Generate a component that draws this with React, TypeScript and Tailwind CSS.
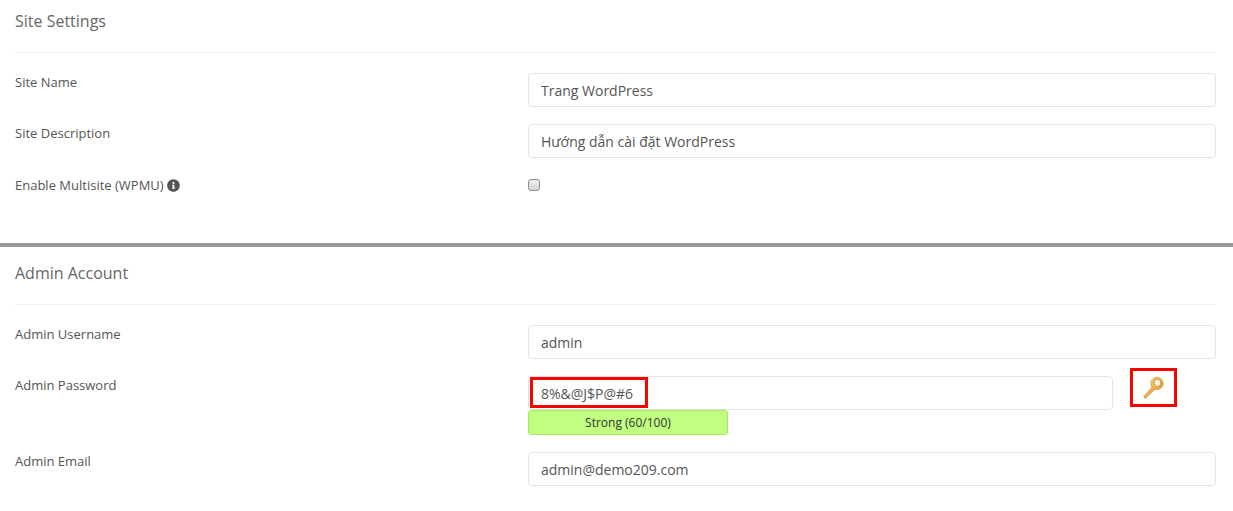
import type { ReactNode } from 'react';
import { FaInfoCircle } from 'react-icons/fa';

const fontStack = "font-['Open_Sans','Noto_Sans',sans-serif]";

function TextInput({ value, className = 'w-full' }: { value: string; className?: string }) {
  return (
    <input
      type="text"
      readOnly
      value={value}
      className={`block h-[34px] rounded-[4px] border border-[#e3e3e3] bg-white px-3 text-[14px] text-[#555] outline-none ${className}`}
    />
  );
}

function Row({ label, children }: { label: ReactNode; children: ReactNode }) {
  return (
    <div className="flex items-start">
      <div className="w-[513px] shrink-0 text-[13px] leading-[18px] font-medium text-[#555]">{label}</div>
      <div className="min-w-0 flex-1">{children}</div>
    </div>
  );
}

function KeyIcon() {
  return (
    <svg width="24" height="24" viewBox="0 0 24 24">
      <defs>
        <linearGradient id="keyGold" x1="0" y1="0" x2="1" y2="1">
          <stop offset="0" stopColor="#fbd36b" />
          <stop offset="1" stopColor="#e8962a" />
        </linearGradient>
      </defs>
      <path d="M3 22.4 1.8 20.8 10.6 10.4 13.4 12.8 6.6 19.4 5.4 19.6 4.8 21.2Z" fill="url(#keyGold)" stroke="#b97a32" strokeWidth="0.6" />
      <circle cx="15" cy="7.4" r="6.2" fill="url(#keyGold)" stroke="#c9a06a" strokeWidth="0.8" />
      <circle cx="15.4" cy="6.9" r="3.6" fill="#f3efe6" stroke="#c98a30" strokeWidth="0.9" />
    </svg>
  );
}

export default function App() {
  return (
    <div className={`relative h-[511px] overflow-hidden bg-white ${fontStack}`}>
      <section className="h-[243px] pr-[17px] pl-[15px]">
        <h2 className="h-[53px] border-b border-[#eeeeee] pt-[10px] text-[16px] leading-[22px] font-medium text-[#666]">Site Settings</h2>
        <div className="flex flex-col gap-[17px] pt-[20px]">
          <Row label="Site Name">
            <TextInput value="Trang WordPress" />
          </Row>
          <Row label="Site Description">
            <TextInput value="Hướng dẫn cài đặt WordPress" />
          </Row>
          <Row
            label={
              <span className="flex items-center gap-[3px] pt-[1px]">
                Enable Multisite (WPMU)
                <FaInfoCircle className="h-[13px] w-[13px] text-[#555]" />
              </span>
            }
          >
            <input
              type="checkbox"
              readOnly
              className="mt-[4px] block h-[12px] w-[12px] appearance-none rounded-[3px] border border-[#8f8f8f] bg-linear-to-b from-[#ededed] to-[#d6d6d6]"
            />
          </Row>
        </div>
      </section>

      <section className="border-t-[4px] border-[#999999] pr-[17px] pl-[15px]">
        <h2 className="h-[58px] border-b border-[#eeeeee] pt-[15px] text-[16px] leading-[22px] font-medium text-[#666]">Admin Account</h2>
        <div className="flex flex-col gap-[17px] pt-[20px]">
          <Row label="Admin Username">
            <TextInput value="admin" />
          </Row>
          <Row label="Admin Password">
            <TextInput value="8%&@J$P@#6" className="w-[585px]" />
            <div className="flex h-[25px] w-[200px] items-center justify-center rounded-[3px] border border-[#a5e85c] bg-[#c0ff80] text-[12px] text-[#333]">
              Strong (60/100)
            </div>
          </Row>
          <Row label="Admin Email">
            <TextInput value="admin@demo209.com" />
          </Row>
        </div>
      </section>

      {/* red annotation boxes and the key icon sit over the form */}
      <div className="absolute top-[377px] left-[530px] h-[31px] w-[118px] border-[3px] border-[#ff0000]" />
      <div className="absolute top-[368px] left-[1130px] flex h-[39px] w-[47px] items-center justify-center border-[3px] border-[#ff0000]">
        <KeyIcon />
      </div>
    </div>
  );
}
